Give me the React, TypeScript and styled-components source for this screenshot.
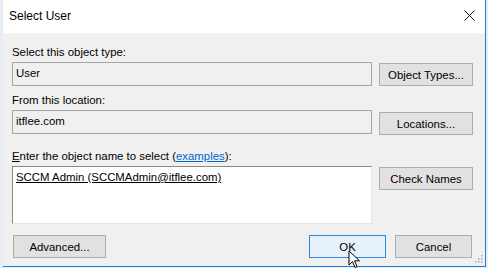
import styled, { createGlobalStyle } from "styled-components";

const GlobalStyle = createGlobalStyle`
  html, body {
    margin: 0;
    padding: 0;
    background: #e6edf5;
  }
  body {
    font-family: "Liberation Sans", Arial, sans-serif;
    font-size: 11.4px;
    color: #000;
  }
`;

export default function App() {
  return (
    <>
      <GlobalStyle />
      <Screen>
        <Window>
          <TitleBar>
            <Title>Select User</Title>
            <CloseButton aria-label="Close">
              <svg width="11" height="11" viewBox="0 0 11 11">
                <path d="M0.5 0.5 L10.5 10.5 M10.5 0.5 L0.5 10.5" stroke="#1a1a1a" strokeWidth="1" />
              </svg>
            </CloseButton>
          </TitleBar>

          <Body>
            <Section>
              <Label>Select this object type:</Label>
              <Row>
                <Field>User</Field>
                <Button $offset={1}>Object Types...</Button>
              </Row>
            </Section>

            <Section $gap={7}>
              <Label>From this location:</Label>
              <Row>
                <Field>itflee.com</Field>
                <Button $offset={2}>Locations...</Button>
              </Row>
            </Section>

            <Section $gap={14}>
              <Label>
                <u>E</u>nter the object name to select (<Link>examples</Link>):
              </Label>
              <Row>
                <NameBox>
                  <Resolved>SCCM Admin (SCCMAdmin@itflee.com)</Resolved>
                </NameBox>
                <Button $offset={1}>Check Names</Button>
              </Row>
            </Section>

            <Footer>
              <Button $width={93}>Advanced...</Button>
              <FooterRight>
                <Button $width={77} $primary>OK</Button>
                <Button $width={77}>Cancel</Button>
              </FooterRight>
            </Footer>

            <SizeGrip>
              <svg width="9" height="9" viewBox="0 0 9 9">
                {[
                  [7, 1],
                  [7, 4],
                  [4, 4],
                  [7, 7],
                  [4, 7],
                  [1, 7],
                ].map(([x, y]) => (
                  <rect key={`${x}-${y}`} x={x} y={y} width="1.5" height="1.5" fill="#a8a8a8" />
                ))}
              </svg>
            </SizeGrip>
          </Body>

          <Cursor>
            <svg width="14" height="20" viewBox="0 0 14 20">
              <path
                d="M1 1 L1 15 L4.5 11.5 L7 17.5 L9 16.6 L6.6 10.8 L11.5 10.8 Z"
                fill="#fff"
                stroke="#000"
                strokeWidth="1"
                strokeLinejoin="round"
              />
            </svg>
          </Cursor>
        </Window>
      </Screen>
    </>
  );
}

const Screen = styled.div`
  width: 488px;
  height: 268px;
  overflow: hidden;
  padding-left: 3px;
  box-sizing: border-box;
`;

const Window = styled.div`
  position: relative;
  width: 483px;
  height: 267px;
  box-sizing: border-box;
  border-right: 1px solid #1c7ed6;
  border-bottom: 1px solid #1c7ed6;
  display: flex;
  flex-direction: column;
  background: #f0f0f0;
`;

const TitleBar = styled.div`
  height: 33px;
  flex: none;
  background: #fff;
  display: flex;
  align-items: center;
  justify-content: space-between;
  padding: 0 10px 0 6px;
`;

const Title = styled.span`
  font-size: 12px;
  color: #000;
  margin-top: -1px;
`;

const CloseButton = styled.div`
  width: 11px;
  height: 11px;
  display: flex;
  margin-top: -2px;
`;

const Body = styled.div`
  position: relative;
  flex: 1;
  padding: 12px 0 0 9px;
  display: flex;
  flex-direction: column;
`;

const Section = styled.div<{ $gap?: number }>`
  display: flex;
  flex-direction: column;
  gap: 3px;
  margin-top: ${(p) => p.$gap ?? 0}px;
`;

const Label = styled.div`
  height: 14px;
  line-height: 14px;
  white-space: nowrap;
`;

const Link = styled.span`
  color: #0066cc;
  text-decoration: underline;
`;

const Row = styled.div`
  display: flex;
  gap: 7px;
  align-items: flex-start;
`;

const Field = styled.div`
  width: 360px;
  height: 24px;
  box-sizing: border-box;
  border: 1px solid #a5a5a5;
  background: #f0f0f0;
  padding: 0 3px;
  line-height: 21px;
`;

const NameBox = styled.div`
  width: 360px;
  height: 58px;
  box-sizing: border-box;
  background: #fff;
  border-top: 1px solid #8a8a8a;
  border-left: 1px solid #8a8a8a;
  border-right: 1px solid #e3e3e3;
  border-bottom: 1px solid #e3e3e3;
  padding: 3px 3px;
`;

const Resolved = styled.span`
  text-decoration: underline;
  line-height: 14px;
`;

const Button = styled.div<{ $width?: number; $offset?: number; $primary?: boolean }>`
  width: ${(p) => p.$width ?? 94}px;
  height: 23px;
  box-sizing: border-box;
  margin-top: ${(p) => p.$offset ?? 0}px;
  border: 1px solid ${(p) => (p.$primary ? "#2f88e0" : "#adadad")};
  background: ${(p) => (p.$primary ? "#e5f1fb" : "#e1e1e1")};
  display: flex;
  align-items: center;
  justify-content: center;
  white-space: nowrap;
`;

const Footer = styled.div`
  margin-top: 11px;
  padding-left: 1px;
  width: 459px;
  display: flex;
  justify-content: space-between;
`;

const FooterRight = styled.div`
  display: flex;
  gap: 9px;
`;

const SizeGrip = styled.div`
  position: absolute;
  right: 2px;
  bottom: 3px;
  display: flex;
`;

const Cursor = styled.div`
  position: absolute;
  left: 345px;
  top: 250px;
  display: flex;
`;
